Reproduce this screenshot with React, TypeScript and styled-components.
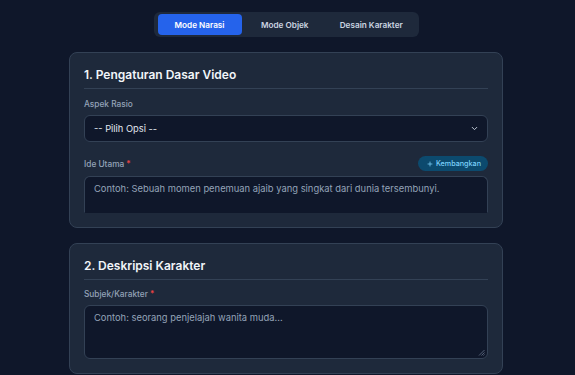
import React from "react";
import styled, { createGlobalStyle } from "styled-components";

const Global = createGlobalStyle`
  html, body { margin: 0; padding: 0; background: #0f172a; }
  body { font-family: Inter, "Noto Sans", sans-serif; color: #e2e8f0; }
  * { box-sizing: border-box; }
`;

const Page = styled.div`
  width: 575px;
  height: 375px;
  display: flex;
  flex-direction: column;
  align-items: center;
  padding: 12px 3px 0 0;
  overflow: hidden;
`;

const Tabs = styled.div`
  display: flex;
  align-items: center;
  padding: 2px 4px;
  background: #1e293b;
  border-radius: 6px;
  width: 265px;
  height: 25px;
  flex-shrink: 0;
`;

const Tab = styled.button<{ $active?: boolean }>`
  all: unset;
  box-sizing: border-box;
  height: 21px;
  flex: ${(p) => (p.$active ? "0 0 84px" : "1 1 0")};
  display: flex;
  align-items: center;
  justify-content: center;
  border-radius: 4px;
  font-family: Inter, sans-serif;
  font-size: 8.2px;
  font-weight: 600;
  color: ${(p) => (p.$active ? "#ffffff" : "#cbd5e1")};
  background: ${(p) => (p.$active ? "#2563eb" : "transparent")};
  white-space: nowrap;
`;

const Card = styled.section`
  width: 434px;
  margin-top: 15px;
  background: #1e293b;
  border: 1px solid #334155;
  border-radius: 8px;
  padding: 12px 14px 14px;
  flex-shrink: 0;
`;

const Title = styled.h2`
  margin: 0;
  font-size: 12px;
  font-weight: 600;
  color: #f1f5f9;
  line-height: 20px;
  padding-bottom: 3px;
  border-bottom: 1px solid #334155;
`;

const Field = styled.div<{ $gap?: number }>`
  margin-top: ${(p) => p.$gap ?? 9}px;
  display: flex;
  flex-direction: column;
`;

const LabelRow = styled.div<{ $h?: number; $after?: number }>`
  display: flex;
  align-items: center;
  justify-content: space-between;
  height: ${(p) => p.$h ?? 12}px;
  margin-bottom: ${(p) => p.$after ?? 5}px;
`;

const Label = styled.label`
  font-size: 8.3px;
  font-weight: 500;
  color: #94a3b8;
`;

const Req = styled.span`
  color: #ef4444;
  margin-left: 2px;
`;

const SelectBox = styled.div`
  height: 27px;
  border: 1px solid #334155;
  border-radius: 6px;
  background: #0f172a;
  display: flex;
  align-items: center;
  justify-content: space-between;
  padding: 0 8px 0 9px;
  font-size: 9.3px;
  color: #e2e8f0;
`;

const TextArea = styled.div<{ $h: number; $clipped?: boolean }>`
  height: ${(p) => p.$h}px;
  border: 1px solid #334155;
  border-bottom-color: ${(p) => (p.$clipped ? "transparent" : "#334155")};
  border-radius: ${(p) => (p.$clipped ? "6px 6px 0 0" : "6px")};
  background: #0f172a;
  padding: 5px 9px;
  font-size: 9.4px;
  line-height: 14px;
  color: #94a3b8;
  position: relative;
`;

const Grip = styled.svg`
  position: absolute;
  right: 2px;
  bottom: 2px;
`;

const Pill = styled.button`
  all: unset;
  box-sizing: border-box;
  width: 70px;
  height: 15px;
  padding: 0 7px 0 9px;
  border-radius: 999px;
  background: #0c4a6e;
  color: #7dd3fc;
  font-family: Inter, sans-serif;
  font-size: 7.2px;
  font-weight: 500;
  display: flex;
  align-items: center;
  justify-content: space-between;
`;

export default function App() {
  return (
    <>
      <Global />
      <Page>
        <Tabs>
          <Tab $active>Mode Narasi</Tab>
          <Tab>Mode Objek</Tab>
          <Tab>Desain Karakter</Tab>
        </Tabs>

        <Card>
          <Title>1. Pengaturan Dasar Video</Title>
          <Field>
            <LabelRow>
              <Label>Aspek Rasio</Label>
            </LabelRow>
            <SelectBox>
              <span>-- Pilih Opsi --</span>
              <svg width="9" height="9" viewBox="0 0 24 24" fill="none" stroke="#cbd5e1" strokeWidth="2.5" strokeLinecap="round" strokeLinejoin="round">
                <path d="M6 9l6 6 6-6" />
              </svg>
            </SelectBox>
          </Field>
          <Field $gap={14}>
            <LabelRow $h={15}>
              <Label>
                Ide Utama<Req>*</Req>
              </Label>
              <Pill>
                <svg width="6" height="6" viewBox="0 0 24 24" fill="none" stroke="#7dd3fc" strokeWidth="3" strokeLinecap="round">
                  <path d="M12 4v16M4 12h16" />
                </svg>
                Kembangkan
              </Pill>
            </LabelRow>
            <TextArea $h={37} $clipped>
              Contoh: Sebuah momen penemuan ajaib yang singkat dari dunia tersembunyi.
            </TextArea>
          </Field>
        </Card>

        <Card>
          <Title>2. Deskripsi Karakter</Title>
          <Field $gap={8}>
            <LabelRow $after={5}>
              <Label>
                Subjek/Karakter<Req>*</Req>
              </Label>
            </LabelRow>
            <TextArea $h={54}>
              Contoh: seorang penjelajah wanita muda...
              <Grip width="7" height="7" viewBox="0 0 7 7">
                <path d="M6.5 1L1 6.5M6.5 3.5L3.5 6.5M6.5 5.5L5.5 6.5" stroke="#64748b" strokeWidth="0.8" />
              </Grip>
            </TextArea>
          </Field>
        </Card>
      </Page>
    </>
  );
}
